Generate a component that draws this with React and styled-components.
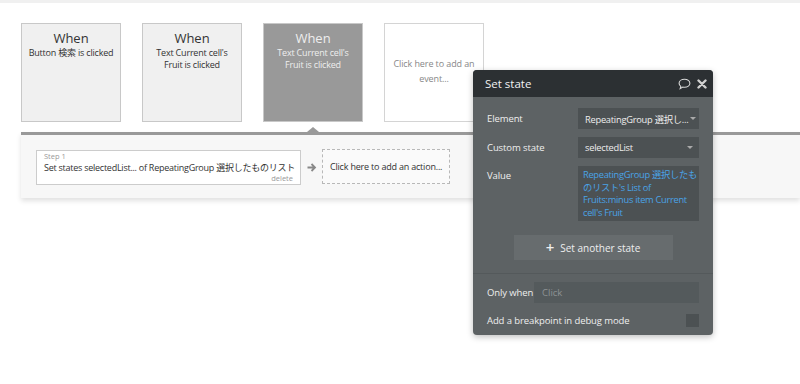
import React from 'react';
import styled, { createGlobalStyle } from 'styled-components';

const GlobalStyle = createGlobalStyle`
  html, body {
    margin: 0;
    padding: 0;
    background: #fff;
    font-family: 'Open Sans', 'Noto Sans CJK JP', sans-serif;
  }
`;

const Page = styled.div`
  position: relative;
  width: 800px;
  height: 384px;
  overflow: hidden;
`;

const TopStrip = styled.div`
  height: 3px;
  background: #f0f0f0;
`;

const EventRow = styled.div`
  display: flex;
  gap: 21px;
  padding: 20px 0 0 21px;
`;

const EventCard = styled.div`
  box-sizing: border-box;
  width: 100px;
  height: 99px;
  border: 1px solid ${p => (p.$variant === 'add' ? '#d4d4d4' : '#c8c8c8')};
  background: ${p =>
    p.$variant === 'active' ? '#999' : p.$variant === 'add' ? '#fff' : '#f0f0f0'};
  color: ${p => (p.$variant === 'active' ? '#eee' : p.$variant === 'add' ? '#888' : '#333')};
  display: flex;
  flex-direction: column;
  align-items: center;
  justify-content: ${p => (p.$variant === 'add' ? 'center' : 'flex-start')};
  text-align: center;
  padding: ${p => (p.$variant === 'add' ? '0 8px' : '5px 2px 0')};
`;

const When = styled.div`
  font-size: 13px;
  line-height: 18px;
`;

const EventText = styled.div`
  font-size: 9px;
  line-height: 11.5px;
  letter-spacing: -0.2px;
  white-space: nowrap;
`;

const AddText = styled.div`
  font-size: 9px;
  line-height: 15px;
  letter-spacing: -0.1px;
  margin-top: -4px;
`;

const Workflow = styled.div`
  position: relative;
  margin: 10px 0 0 21px;
  height: 66px;
  border-top: 3px solid #999;
  background: #f7f7f7;
  box-shadow: 0 3px 5px rgba(0, 0, 0, 0.12);
  display: flex;
  align-items: flex-start;
  padding: 15px 0 0 15px;
  box-sizing: border-box;
  &::before {
    content: '';
    position: absolute;
    left: 286px;
    top: -8px;
    border-left: 6px solid transparent;
    border-right: 6px solid transparent;
    border-bottom: 5px solid #999;
  }
`;

const StepBox = styled.div`
  box-sizing: border-box;
  width: 265px;
  height: 35px;
  border: 1px solid #ccc;
  background: #fff;
  padding: 1px 7px 0 7px;
  color: #333;
`;

const StepLabel = styled.div`
  font-size: 7.5px;
  line-height: 9px;
  color: #999;
`;

const StepText = styled.div`
  font-size: 9px;
  line-height: 13px;
  letter-spacing: -0.25px;
  white-space: nowrap;
`;

const StepDelete = styled.div`
  font-size: 7.5px;
  line-height: 9px;
  color: #999;
  text-align: right;
`;

const Arrow = styled.div`
  width: 21px;
  height: 35px;
  display: flex;
  align-items: center;
  justify-content: center;
`;

const AddAction = styled.div`
  box-sizing: border-box;
  width: 128px;
  height: 35px;
  margin-top: -1px;
  border: 1px dashed #b8b8b8;
  background: #fafafa;
  display: flex;
  align-items: center;
  padding-left: 7px;
  font-size: 9px;
  letter-spacing: -0.2px;
  white-space: nowrap;
  color: #333;
`;

const Panel = styled.div`
  position: absolute;
  left: 473px;
  top: 70px;
  width: 240px;
  border-radius: 4px;
  overflow: hidden;
  background: #5d6264;
  box-shadow: 0 2px 6px rgba(0, 0, 0, 0.25);
  color: #eee;
`;

const PanelHeader = styled.div`
  height: 27px;
  background: #2c3033;
  display: flex;
  align-items: center;
  padding: 0 6px 0 12px;
  font-size: 11.5px;
  color: #f2f2f2;
`;

const HeaderTitle = styled.div`
  flex: 1;
`;

const HeaderIcons = styled.div`
  display: flex;
  align-items: center;
  gap: 6px;
`;

const PanelBody = styled.div`
  padding: 11px 14px 0 14px;
`;

const Row = styled.div`
  display: flex;
  align-items: ${p => (p.$top ? 'flex-start' : 'center')};
  margin-bottom: ${p => p.$mb ?? 8}px;
`;

const Label = styled.div`
  flex: none;
  width: ${p => p.$w || '91px'};
  font-size: 9.5px;
  letter-spacing: -0.1px;
  white-space: nowrap;
  color: #eee;
  padding-top: ${p => (p.$top ? '3px' : '0')};
`;

const Select = styled.div`
  box-sizing: border-box;
  width: 121px;
  height: 21px;
  background: #4c5153;
  display: flex;
  align-items: center;
  justify-content: space-between;
  padding: 0 6px 0 7px;
  font-size: 9.3px;
  letter-spacing: -0.25px;
  color: #eee;
  white-space: nowrap;
  &::after {
    content: '';
    flex: none;
    margin-left: 2px;
    border-left: 3px solid transparent;
    border-right: 3px solid transparent;
    border-top: 3px solid #aaa;
  }
`;

const ValueBox = styled.div`
  box-sizing: border-box;
  width: 121px;
  height: 55px;
  background: #4c5153;
  padding: 3px 1px 0 5px;
  font-size: 9.3px;
  letter-spacing: -0.3px;
  line-height: 12.6px;
  color: #4aa3e6;
`;

const AddStateButton = styled.div`
  width: 159px;
  height: 25px;
  margin: 14px auto 0;
  background: #676c6e;
  display: flex;
  align-items: center;
  justify-content: center;
  gap: 6px;
  font-size: 10px;
  color: #eee;
`;

const Plus = styled.span`
  font-size: 15px;
  line-height: 15px;
  font-weight: 600;
`;

const Divider = styled.div`
  height: 1px;
  background: #54595b;
  margin: 13px 0 0;
`;

const Footer = styled.div`
  padding: 8px 14px 8px 14px;
`;

const Input = styled.div`
  box-sizing: border-box;
  flex: 1;
  height: 21px;
  background: #545a5c;
  display: flex;
  align-items: center;
  padding: 0 8px;
  font-size: 9.5px;
  color: #8d9294;
`;

const Checkbox = styled.div`
  width: 13px;
  height: 13px;
  background: #4c5153;
  margin-left: auto;
`;

const BubbleIcon = () => (
  <svg width="13" height="12" viewBox="0 0 13 12">
    <path
      d="M6.5 1.2c3 0 5.4 1.8 5.4 4s-2.4 4-5.4 4c-.6 0-1.2-.1-1.7-.2L2.2 10.6l.6-2.2C1.8 7.7 1.1 6.5 1.1 5.2c0-2.2 2.4-4 5.4-4z"
      fill="none"
      stroke="#d8d8d8"
      strokeWidth="1.1"
    />
  </svg>
);

const CloseIcon = () => (
  <svg width="10" height="10" viewBox="0 0 10 10">
    <path d="M1.5 1.5l7 7M8.5 1.5l-7 7" stroke="#d0d0d0" strokeWidth="2.4" strokeLinecap="round" />
  </svg>
);

const ArrowIcon = () => (
  <svg width="10" height="9" viewBox="0 0 10 9">
    <path d="M0.5 4.5h7M4.5 1l3.5 3.5L4.5 8" fill="none" stroke="#888" strokeWidth="1.8" />
  </svg>
);

export default function App() {
  return (
    <Page>
      <GlobalStyle />
      <TopStrip />
      <EventRow>
        <EventCard>
          <When>When</When>
          <EventText>Button 検索 is clicked</EventText>
        </EventCard>
        <EventCard>
          <When>When</When>
          <EventText>
            Text Current cell's
            <br />
            Fruit is clicked
          </EventText>
        </EventCard>
        <EventCard $variant="active">
          <When>When</When>
          <EventText>
            Text Current cell's
            <br />
            Fruit is clicked
          </EventText>
        </EventCard>
        <EventCard $variant="add">
          <AddText>Click here to add an event...</AddText>
        </EventCard>
      </EventRow>
      <Workflow>
        <StepBox>
          <StepLabel>Step 1</StepLabel>
          <StepText>Set states selectedList... of RepeatingGroup 選択したものリスト</StepText>
          <StepDelete>delete</StepDelete>
        </StepBox>
        <Arrow>
          <ArrowIcon />
        </Arrow>
        <AddAction>Click here to add an action...</AddAction>
      </Workflow>
      <Panel>
        <PanelHeader>
          <HeaderTitle>Set state</HeaderTitle>
          <HeaderIcons>
            <BubbleIcon />
            <CloseIcon />
          </HeaderIcons>
        </PanelHeader>
        <PanelBody>
          <Row>
            <Label>Element</Label>
            <Select>RepeatingGroup 選択し...</Select>
          </Row>
          <Row>
            <Label>Custom state</Label>
            <Select>selectedList</Select>
          </Row>
          <Row $top $mb={0}>
            <Label $top>Value</Label>
            <ValueBox>RepeatingGroup 選択したものリスト's List of Fruits:minus item Current cell's Fruit</ValueBox>
          </Row>
          <AddStateButton>
            <Plus>+</Plus>
            Set another state
          </AddStateButton>
        </PanelBody>
        <Divider />
        <Footer>
          <Row $mb={11}>
            <Label $w="47px">Only when</Label>
            <Input>Click</Input>
          </Row>
          <Row $mb={0}>
            <Label $w="auto">Add a breakpoint in debug mode</Label>
            <Checkbox />
          </Row>
        </Footer>
      </Panel>
    </Page>
  );
}
